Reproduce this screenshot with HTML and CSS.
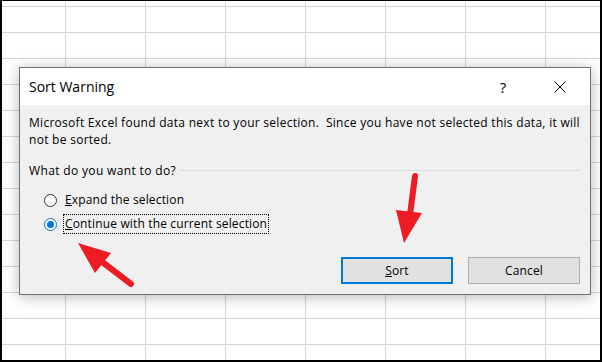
FILE: index.html
```html
<!DOCTYPE html>
<html>
<head>
<meta charset="utf-8">
<link rel="stylesheet" href="styles.css">
</head>
<body>
<div class="screen">
  <div class="dialog">
    <div class="titlebar">
      <span class="title">Sort Warning</span>
      <span class="help">?</span>
      <span class="close"><svg width="12" height="12" viewBox="0 0 12 12"><path d="M0.5 0.5 L11.5 11.5 M11.5 0.5 L0.5 11.5" stroke="#000" stroke-width="1" fill="none"/></svg></span>
    </div>
    <div class="body">
      <p class="msg">Microsoft Excel found data next to your selection.&nbsp; Since you have not selected this data, it will<br>not be sorted.</p>
      <div class="group"><span class="group-label">What do you want to do?</span><span class="rule"></span></div>
      <div class="options">
        <div class="opt"><span class="radio"></span><span class="lbl"><u>E</u>xpand the selection</span></div>
        <div class="opt"><span class="radio checked"></span><span class="lbl focus"><u>C</u>ontinue with the current selection</span></div>
      </div>
      <div class="buttons">
        <button class="btn default"><u>S</u>ort</button>
        <button class="btn">Cancel</button>
      </div>
    </div>
  </div>
  <svg class="arrows" width="602" height="362" viewBox="0 0 602 362">
    <line x1="131" y1="284" x2="101" y2="261" stroke="#ed1c24" stroke-width="6" stroke-linecap="round"/>
    <polygon points="78,243 111,253 95,273" fill="#ed1c24"/>
    <line x1="415" y1="176" x2="410" y2="215" stroke="#ed1c24" stroke-width="6" stroke-linecap="round"/>
    <polygon points="404,243 396,210 422,213" fill="#ed1c24"/>
  </svg>
</div>
</body>
</html>
```
FILE: styles.css
```css
html, body {
  margin: 0;
  padding: 0;
}
body {
  font-family: "Open Sans", "Noto Sans", "Liberation Sans", sans-serif;
  color: #000;
}
.screen {
  position: relative;
  width: 602px;
  height: 362px;
  box-sizing: border-box;
  border-style: solid;
  border-color: #000;
  border-width: 1px 2px 2px 2px;
  padding: 66px 0 0 17px;
  background-color: #fff;
  background-image:
    linear-gradient(to right, #d4d4d4 1px, transparent 1px),
    linear-gradient(to bottom, #d4d4d4 1px, transparent 1px);
  background-size: 80px 100%, 100% 26px;
  background-position: 63px 0, 0 5px;
  overflow: hidden;
}
.dialog {
  width: 572px;
  height: 228px;
  box-sizing: border-box;
  border: 1px solid #707070;
  background: #f0f0f0;
  box-shadow: 0 2px 14px rgba(0, 0, 0, 0.28);
  display: flex;
  flex-direction: column;
}
.titlebar {
  height: 37px;
  background: #fff;
  display: flex;
  align-items: center;
  padding-right: 7px;
}
.title {
  font-size: 14px;
  padding-left: 9px;
}
.help {
  margin-left: auto;
  width: 46px;
  text-align: center;
  font-size: 15px;
}
.close {
  width: 46px;
  margin-left: 11px;
  display: flex;
  justify-content: center;
}
.body {
  flex: 1;
  display: flex;
  flex-direction: column;
  padding: 9px 9px 0 9px;
  font-size: 12px;
  letter-spacing: 0.15px;
}
.msg {
  margin: 0;
  line-height: 17px;
  letter-spacing: 0.28px;
}
.group {
  margin-top: 14px;
  display: flex;
  align-items: center;
  gap: 4px;
  line-height: 17px;
}
.group-label {
  letter-spacing: 0.35px;
}
.rule {
  flex: 1;
  border-top: 1px solid #dcdcdc;
}
.options {
  margin-top: 9px;
  padding-left: 15px;
  display: flex;
  flex-direction: column;
}
.opt {
  height: 24px;
  display: flex;
  align-items: center;
}
.radio {
  width: 13px;
  height: 13px;
  box-sizing: border-box;
  border: 1px solid #333;
  border-radius: 50%;
  background: #fff;
  display: flex;
  align-items: center;
  justify-content: center;
}
.radio.checked {
  border-color: #0078d7;
}
.radio.checked::after {
  content: "";
  width: 7px;
  height: 7px;
  border-radius: 50%;
  background: #0078d7;
}
.lbl {
  margin-left: 6px;
  line-height: 16px;
  border: 1px dotted transparent;
  padding: 1px 1px;
}
.lbl.focus {
  border-color: #000;
}
.buttons {
  margin-top: 21px;
  display: flex;
  justify-content: flex-end;
  gap: 15px;
  padding-right: 1px;
}
.btn {
  width: 112px;
  height: 27px;
  box-sizing: border-box;
  border: 1px solid #adadad;
  background: #e1e1e1;
  font-family: inherit;
  font-size: 12px;
  letter-spacing: 0.15px;
  color: #000;
  padding: 0;
}
.btn.default {
  border: 2px solid #0078d7;
}
.arrows {
  position: absolute;
  left: -2px;
  top: -1px;
  pointer-events: none;
}
```
